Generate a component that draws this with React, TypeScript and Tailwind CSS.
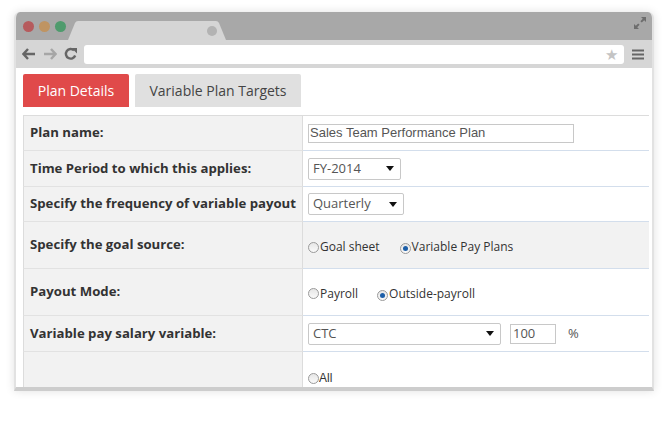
import React from 'react'

const sans = { fontFamily: '"Open Sans", "Liberation Sans", sans-serif' }

function Radio({ checked }: { checked?: boolean }) {
  return (
    <span className="inline-flex items-center justify-center w-[11px] h-[11px] rounded-full border border-[#9a9a9a] bg-gradient-to-b from-[#e6e6e6] to-[#fafafa] shrink-0">
      {checked && <span className="w-[5px] h-[5px] rounded-full bg-[#1d5fa8]" />}
    </span>
  )
}

function Caret() {
  return (
    <svg width="8" height="5" viewBox="0 0 8 5" className="shrink-0">
      <path d="M0 0h8L4 5z" fill="#111" />
    </svg>
  )
}

function Select({ value, w }: { value: string; w: string }) {
  return (
    <div className={`${w} h-[22px] border border-[#c8c8c8] rounded-[2px] bg-white flex items-center justify-between pl-[4px] pr-[6px] text-[13px] text-[#555]`}>
      <span>{value}</span>
      <Caret />
    </div>
  )
}

function Row({ label, h, gray, children }: { label?: string; h: string; gray?: boolean; children?: React.ReactNode }) {
  return (
    <div className={`flex ${h} border-b border-[#d3deec]`}>
      <div className="w-[280px] shrink-0 bg-[#f2f2f2] border-l border-r border-[#dcdcdc] border-b border-b-[#e2e2e2] -mb-px flex items-center pl-[6px] text-[13.2px] font-bold text-[#333]">
        {label}
      </div>
      <div className={`flex-1 flex items-center pl-[5px] ${gray ? 'bg-[#f2f2f2]' : 'bg-white'}`}>{children}</div>
    </div>
  )
}

export default function App() {
  return (
    <div className="w-[668px] h-[430px] bg-white pt-[12px] pl-[14px]" style={sans}>
      <div className="w-[640px] h-[379px] rounded-t-[6px] overflow-hidden flex flex-col border-x-2 border-[#e2e2e2] border-b-4 border-b-[#cdcdcd] shadow-[0_0_10px_rgba(0,0,0,0.12)] bg-white">
        {/* title bar */}
        <div className="h-[28px] bg-[#a8a8a8] flex items-end shrink-0 relative">
          <div className="flex items-center gap-[5px] pl-[7px] self-center">
            <span className="w-[11px] h-[11px] rounded-full bg-[#b65b5d]" />
            <span className="w-[11px] h-[11px] rounded-full bg-[#bf9462]" />
            <span className="w-[11px] h-[11px] rounded-full bg-[#4f9b6d]" />
          </div>
          <div className="relative w-[160px] h-[19px] ml-[2px]">
            <svg width="160" height="19" viewBox="0 0 160 19" className="absolute inset-0">
              <path d="M0 19 L7 2 Q8 0 10 0 L148 0 Q150 0 151 2 L158 19 Z" fill="#d5d5d5" />
              <circle cx="144" cy="10" r="5" fill="#b3b3b3" />
            </svg>
          </div>
          <svg width="14" height="14" viewBox="0 0 14 14" className="absolute right-[5px] top-[4px]">
            <path d="M8 1h5v5l-1.8-1.8-2.4 2.4-1.4-1.4 2.4-2.4zM6 13H1V8l1.8 1.8 2.4-2.4 1.4 1.4-2.4 2.4z" fill="#6d6d6d" />
          </svg>
        </div>
        {/* toolbar */}
        <div className="h-[28px] bg-[#d6d6d6] flex items-center shrink-0 pl-[6px] pr-[6px]">
          <svg width="14" height="12" viewBox="0 0 14 12">
            <path d="M6 1 1.5 6 6 11M1.5 6H13" stroke="#666" strokeWidth="2.4" fill="none" />
          </svg>
          <svg width="14" height="12" viewBox="0 0 14 12" className="ml-[7px]">
            <path d="M8 1l4.5 5L8 11M12.5 6H1" stroke="#a6a6a6" strokeWidth="2.4" fill="none" />
          </svg>
          <svg width="14" height="14" viewBox="0 0 14 14" className="ml-[7px]">
            <path d="M11.2 8.5A4.8 4.8 0 1 1 10 3.3" stroke="#666" strokeWidth="2.4" fill="none" />
            <path d="M7.5 1h5.5v5.5z" fill="#666" />
          </svg>
          <div className="flex-1 h-[19px] bg-white rounded-[3px] ml-[6px] flex items-center justify-end pr-[6px]">
            <span className="text-[15px] leading-none text-[#c4c4c4]">★</span>
          </div>
          <svg width="12" height="11" viewBox="0 0 12 11" className="ml-[8px] mr-[2px]">
            <path d="M0 1.5h12M0 5.5h12M0 9.5h12" stroke="#666" strokeWidth="2.2" />
          </svg>
        </div>
        {/* content */}
        <div className="flex-1 overflow-hidden pl-[7px] pr-[3px] pt-[6px]">
          <div className="flex gap-[6px] h-[33px]">
            <div className="w-[106px] bg-[#e04a4a] text-white text-[14px] flex items-center justify-center rounded-t-[2px]">Plan Details</div>
            <div className="w-[166px] bg-[#e0e0e0] text-[#444] text-[14px] flex items-center justify-center rounded-t-[2px]">Variable Plan Targets</div>
          </div>
          <div className="mt-[8px] border-t border-[#dcdcdc]">
            <Row label="Plan name:" h="h-[35px]">
              <div className="w-[266px] h-[19px] border border-[#c8c8c8] flex items-center pl-[1px] text-[13px] text-[#555]" style={{ fontFamily: '"Liberation Sans", Arial, sans-serif' }}>
                Sales Team Performance Plan
              </div>
            </Row>
            <Row label="Time Period to which this applies:" h="h-[36px]">
              <Select value="FY-2014" w="w-[93px]" />
            </Row>
            <Row label="Specify the frequency of variable payout" h="h-[35px]">
              <Select value="Quarterly" w="w-[96px]" />
            </Row>
            <Row label="Specify the goal source:" h="h-[47px]" gray>
              <div className="flex items-center text-[12px] text-[#333] mt-[4px]">
                <Radio />
                <span className="ml-px">Goal sheet</span>
                <span className="ml-[20px]"><Radio checked /></span>
                <span className="ml-px">Variable Pay Plans</span>
              </div>
            </Row>
            <Row label="Payout Mode:" h="h-[47px]">
              <div className="flex items-center text-[12px] text-[#333] mt-[3px]">
                <Radio />
                <span className="ml-px">Payroll</span>
                <span className="ml-[19px]"><Radio checked /></span>
                <span className="ml-px">Outside-payroll</span>
              </div>
            </Row>
            <Row label="Variable pay salary variable:" h="h-[36px]">
              <div className="flex items-center">
                <Select value="CTC" w="w-[193px]" />
                <div className="ml-[9px] w-[46px] h-[20px] border border-[#c8c8c8] flex items-center pl-[2px] text-[13px] text-[#555]">100</div>
                <span className="ml-[12px] text-[13px] text-[#555]">%</span>
              </div>
            </Row>
            <div className="flex h-[40px]">
              <div className="w-[280px] shrink-0 bg-[#f2f2f2] border-l border-r border-[#dcdcdc]" />
              <div className="flex-1 flex items-start pl-[5px] pt-[17px]">
                <div className="flex items-center text-[12px] text-[#333]" style={{ fontFamily: '"Liberation Sans", Arial, sans-serif' }}>
                  <Radio />
                  <span>All</span>
                </div>
              </div>
            </div>
          </div>
        </div>
      </div>
    </div>
  )
}
